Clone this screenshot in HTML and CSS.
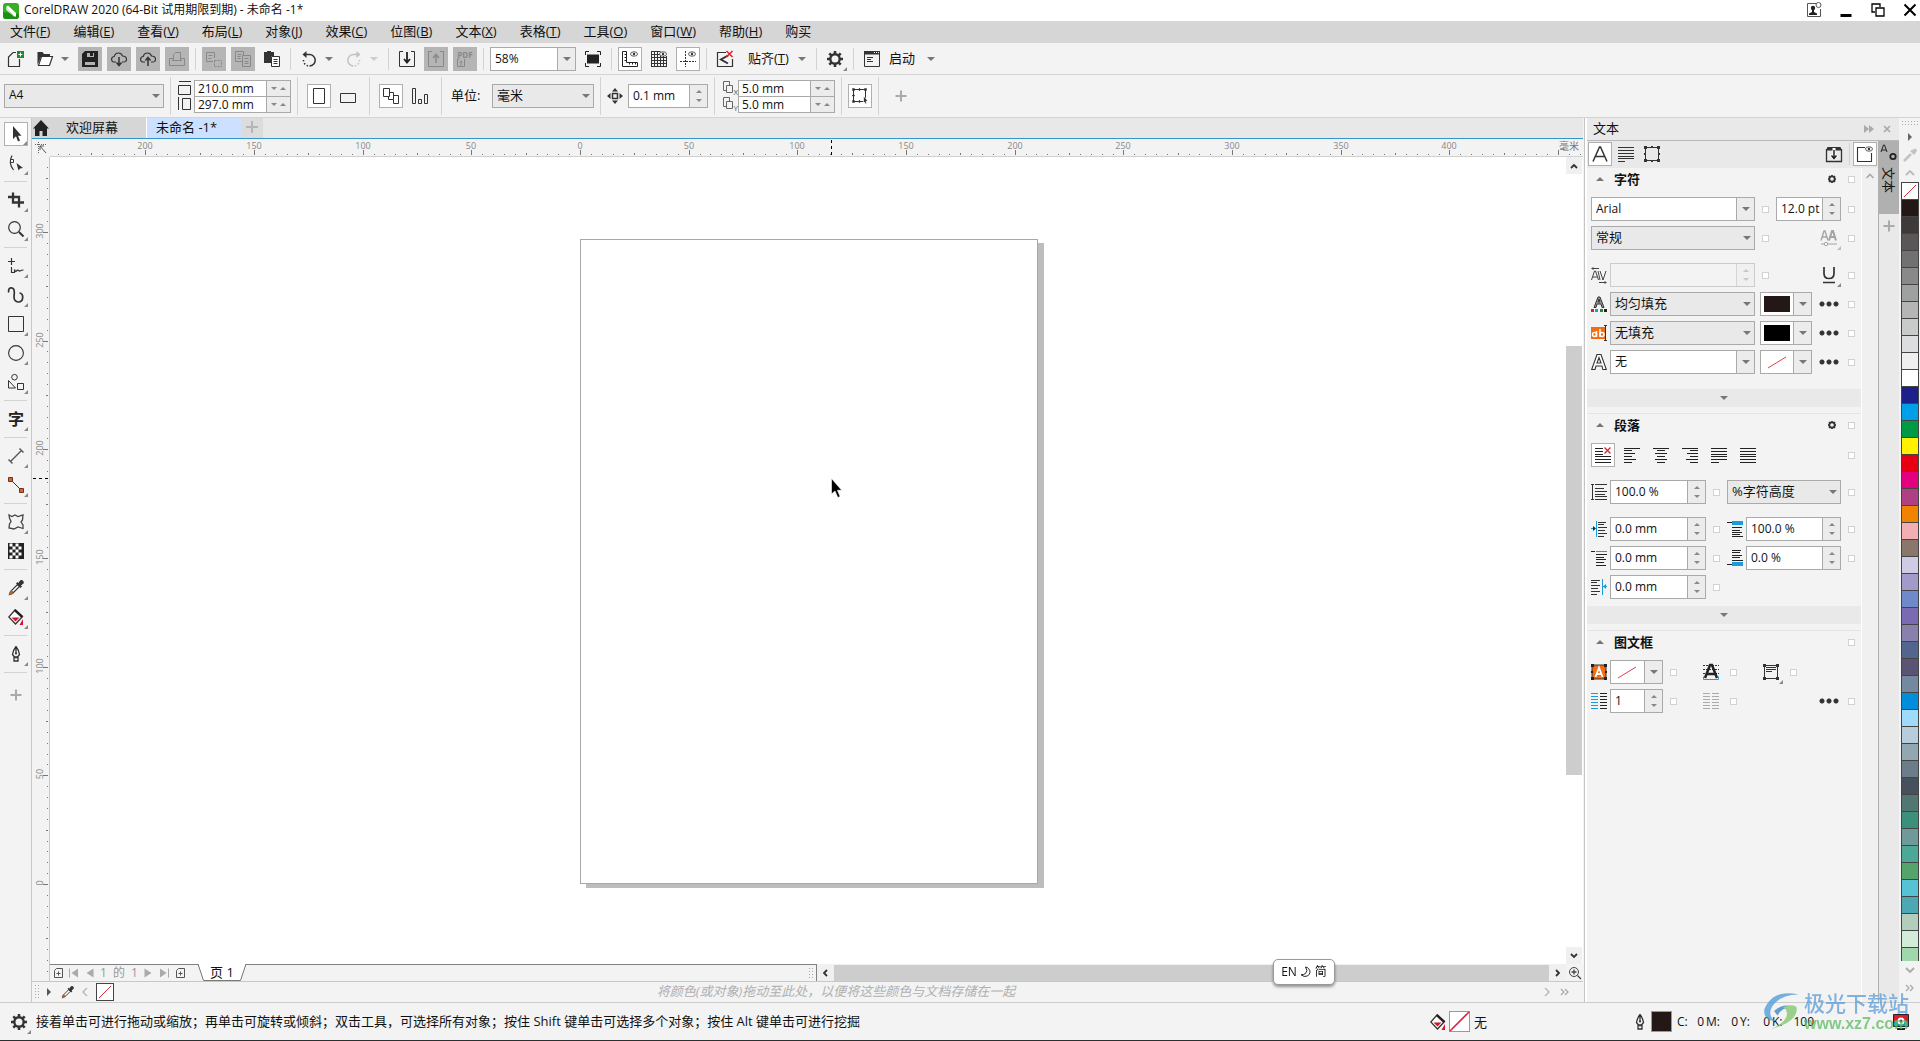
FILE: index.html
```html
<!DOCTYPE html>
<html lang="zh-CN">
<head>
<meta charset="utf-8">
<title>CorelDRAW 2020 (64-Bit 试用期限到期) - 未命名 -1*</title>
<link rel="stylesheet" href="styles.css">
</head>
<body>
<svg class="sprite" aria-hidden="true">
  <symbol id="i-gear" viewBox="0 0 16 16"><circle cx="8" cy="8" r="4.7" fill="none" stroke="#333" stroke-width="2.4"/><path d="M8 0v3M8 13v3M0 8h3M13 8h3M2.3 2.3l2 2M11.700 11.700l2 2M2.300 13.700l2-2M11.700 4.300l2-2" stroke="#333" stroke-width="2.6"/></symbol>
  <symbol id="i-gear-s" viewBox="0 0 16 16"><circle cx="8" cy="8" r="2.700" fill="none" stroke="#333" stroke-width="1.800"/><path d="M8 4v1M8 11v1M4 8h1M11 8h1M5 5l1 1M10 10l1 1M5 11l1-1M10 6l1-1" stroke="#333" stroke-width="1.600"/></symbol>
  <symbol id="i-eye" viewBox="0 0 8 6"><ellipse cx="4" cy="3" rx="3.500" ry="2.200" fill="#fff" stroke="#333" stroke-width=".8"/><circle cx="4" cy="3" r="1.200" fill="#333"/></symbol>
  <symbol id="i-dropper" viewBox="0 0 16 16"><path d="M1.500 14.500l1-3 7-7 2 2-7 7z" fill="#fff" stroke="#333" stroke-width="1.200"/><path d="M1 15l1-3.500 1.500-1.500 2 2L4 14z" fill="#b5652b"/><path d="M8 3.500L12.500 8 14 6.500 13 5.500l2.500-2q.8-1.500-.5-2.800T12 .5L10.500 3l-1-1z" fill="#333"/></symbol>
  <symbol id="i-bucket" viewBox="0 0 16 16"><path d="M7 1l7.500 6.500L7.500 15 .8 8z" fill="#fff" stroke="#333" stroke-width="1.300"/><path d="M7.500 0l7.500 7-1.500 2L6 2z" fill="#222"/><path d="M3.500 8.500h8l-4 4z" fill="#d8102c"/><path d="M15 10v6h-3.500z" fill="#d8102c"/></symbol>
  <symbol id="i-pen" viewBox="0 0 16 16"><path d="M8 .5q-3 4-3.500 8L6.500 11h3l2-2.500Q11 4.500 8 .5zM8 1v7M6 11.500h4V15H6z" fill="none" stroke="#333" stroke-width="1.300"/><circle cx="8" cy="7.500" r="1" fill="#333"/></symbol>
  <symbol id="i-pgadd" viewBox="0 0 12 12"><path d="M4.500 1.500h6v9h-8v-7zM6.500 4.500v4M4.500 6.500h4" fill="none" stroke="#555"/></symbol>
  <symbol id="i-portrait" viewBox="0 0 16 16"><path d="M2.500.5h11v15h-11z" fill="none" stroke="#333"/></symbol>
  <symbol id="i-dup" viewBox="0 0 16 16"><path d="M5.500 10.500h-3v-9h6v4M5.500 5.500h6v7h-6z" fill="none" stroke="#666"/></symbol>
  <symbol id="i-cloud" viewBox="0 0 16 16"><path d="M5 11H3.500Q.6 11 .6 8.300T3.300 5.500Q4 2 7.500 2q3 0 4 3 4 .3 4 3.200T12 11h-1" fill="none" stroke="#333" stroke-width="1.200"/></symbol>
</svg>

<header class="titlebar">
  <svg class="applogo" viewBox="0 0 16 16"><rect width="16" height="16" rx="3" fill="#36b022"/><path d="M0 9v4q0 3 3 3h10q3 0 3-3v-2z" fill="#1c8f15"/><path d="M3 4l2-1.500L13 10v3.500H11z" fill="#fff"/><path d="M3 4q-.2 3 1.500 4L11 13.500" fill="#dff0d8"/></svg>
  <h1>CorelDRAW 2020 (64-Bit 试用期限到期) - 未命名 -1*</h1>
  <div class="winbtns">
    <button aria-label="账户"><svg viewBox="0 0 16 16"><path d="M10 1.500H1.500v13h13V7" fill="none" stroke="#555"/><circle cx="7" cy="6" r="2.200" fill="#222"/><path d="M6 7h2v3l3 1.500V13H3v-1.500L6 10z" fill="#222"/><circle cx="12.500" cy="3" r="2.500" fill="#fff" stroke="#555"/></svg></button>
    <button aria-label="最小化"><svg viewBox="0 0 16 16"><path d="M2.500 12h11v3h-11z" fill="#000"/></svg></button>
    <button aria-label="还原"><svg viewBox="0 0 16 16"><path d="M5 10H2V2h8v3M6 6h8v8H6z" fill="none" stroke="#000" stroke-width="1.300"/></svg></button>
    <button aria-label="关闭"><svg viewBox="0 0 16 16"><path d="M2.500 2.500l11 11M13.500 2.500l-11 11" stroke="#000" stroke-width="2"/></svg></button>
  </div>
</header>

<nav class="menubar">
  <a href="#">文件(<u>F</u>)</a><a href="#">编辑(<u>E</u>)</a><a href="#">查看(<u>V</u>)</a><a href="#">布局(<u>L</u>)</a><a href="#">对象(<u>J</u>)</a><a href="#">效果(<u>C</u>)</a><a href="#">位图(<u>B</u>)</a><a href="#">文本(<u>X</u>)</a><a href="#">表格(<u>T</u>)</a><a href="#">工具(<u>O</u>)</a><a href="#">窗口(<u>W</u>)</a><a href="#">帮助(<u>H</u>)</a><a href="#">购买</a>
</nav>

<div class="toolbar standard">
  <button class="ib" aria-label="新建"><svg viewBox="0 0 16 16"><path d="M8 1.500H5L.5 6v9.500h11V8" fill="none" stroke="#333" stroke-width="1.200"/><path d="M9 0h7v7H9z" fill="#1b8a35"/><path d="M12.500 1.500v4M10.500 3.500h4" stroke="#fff"/></svg></button>
  <span class="split"><button class="ib" aria-label="打开"><svg viewBox="0 0 16 16"><path d="M.5 14V1h5l1.500 2h6v3H4z" fill="#333"/><path d="M4.500 5.500h11l-3 9H1.500z" fill="#fff" stroke="#333" stroke-width="1.200"/></svg></button><button class="arrow" aria-label="打开选项"></button></span>
  <button class="ib off" aria-label="保存"><svg viewBox="0 0 16 16"><path d="M3 0h13v16H0V3z" fill="#222"/><path d="M5 2h7v4H5zM3 9h10v5H3z" fill="#b3b3b3"/><path d="M8 2h3v3H8zM3 9h10v2H3z" fill="#222"/></svg></button>
  <button class="ib off" aria-label="从云打开"><svg viewBox="0 0 16 16"><use href="#i-cloud"/><path d="M8 6v8M5.500 11.500L8 14.500l2.500-3" fill="none" stroke="#333" stroke-width="1.500"/></svg></button>
  <button class="ib off" aria-label="保存到云"><svg viewBox="0 0 16 16"><use href="#i-cloud"/><path d="M8 15V7M5.500 9.500L8 6.500l2.500 3" fill="none" stroke="#333" stroke-width="1.500"/></svg></button>
  <button class="ib off" aria-label="打印"><svg viewBox="0 0 16 16"><path d="M4.500 9.500v-6l2-2h5v8M4 7.500H.5v7h15v-7H12M3 9.500h10" fill="none" stroke="#888"/></svg></button>
  <i class="sep"></i>
  <button class="ib off" aria-label="剪切"><svg viewBox="0 0 16 16"><path d="M8.500 7V1.500h-8v9H7M2.500 4.500h4M2.500 7.500h3" fill="none" stroke="#888"/><path d="M8.500 9.500h7v6h-7z" fill="none" stroke="#888" stroke-dasharray="2 1"/></svg></button>
  <button class="ib off" aria-label="复制"><svg viewBox="0 0 16 16"><path d="M8 10.500H.5v-10h8V4M2.500 3.500h4M2.500 5.500h3M2.500 7.500h3M7.500 4.500h8v11h-8zM9.500 7.500h4M9.500 10.500h4M9.500 12.500h4" fill="none" stroke="#888"/></svg></button>
  <button class="ib" aria-label="粘贴"><svg viewBox="0 0 16 16"><path d="M0 1h3V0h4v1h3v4H7v7H0z" fill="#333"/><path d="M7.500 5.500h8v10h-8zM9.500 8.500h4M9.500 10.500h4M9.500 12.500h4" fill="#fff" stroke="#333"/></svg></button>
  <i class="sep"></i>
  <span class="split"><button class="ib" aria-label="撤消"><svg viewBox="0 0 16 16"><path d="M4 3.500h4.500a5.700 5.700 0 0 1 0 11.400" fill="none" stroke="#333" stroke-width="1.500"/><path d="M2.500 9a5.700 5.700 0 0 0 6 6" fill="none" stroke="#333" stroke-width="1.500" stroke-dasharray="1.500 1.800"/><path d="M5.500 0v7L1.500 3.500z" fill="#333"/></svg></button><button class="arrow" aria-label="撤消列表"></button></span>
  <span class="split faded"><button class="ib" aria-label="重做"><svg viewBox="0 0 16 16"><path d="M12 3.500H7.500a5.700 5.700 0 0 0 0 11.400" fill="none" stroke="#555" stroke-width="1.500"/><path d="M13.500 9a5.700 5.700 0 0 1-6 6" fill="none" stroke="#555" stroke-width="1.500" stroke-dasharray="1.500 1.800"/><path d="M10.500 0v7l4-3.500z" fill="#555"/></svg></button><button class="arrow" aria-label="重做列表"></button></span>
  <i class="sep"></i>
  <button class="ib" aria-label="导入"><svg viewBox="0 0 16 16"><path d="M4 .5H.5v15h15V.5H12" fill="none" stroke="#333"/><path d="M8 1v10M5 8l3 3.500L11 8" fill="none" stroke="#222" stroke-width="1.800"/></svg></button>
  <button class="ib off" aria-label="导出"><svg viewBox="0 0 16 16"><path d="M4 .5H.5v15h15V.5H12" fill="none" stroke="#888"/><path d="M8 12V4M5 7l3-3.500L11 7" fill="none" stroke="#888" stroke-width="1.500"/></svg></button>
  <button class="ib off pdf" aria-label="发布为PDF"><b>PDF</b><svg viewBox="0 0 16 8"><path d="M2.500 0h-2v7.500h7V0M4 7V2M2.500 3.500L4 2l1.500 1.500" fill="none" stroke="#888"/></svg></button>
  <i class="sep"></i>
  <span class="ecombo zoomlvl"><input type="text" value="58%" aria-label="缩放级别"><button class="arrow" aria-label="缩放列表"></button></span>
  <button class="ib" aria-label="全屏预览"><svg viewBox="0 0 16 16"><path d="M2 3.500h12v9H2z" fill="#222"/><path d="M.5 4V.5H4M12 .5h3.500V4M.5 12v3.500H4M12 15.500h3.500V12" fill="none" stroke="#222"/></svg></button>
  <i class="sep"></i>
  <button class="ib on" aria-label="标尺"><svg viewBox="0 0 16 16"><path d="M.5.5h4v11h11v4H.5zM2.500 3.500h2M2.500 6.500h2M2.500 9.500h2M7.500 13.500v-2M10.500 13.500v-2M13.500 13.500v-2" fill="none" stroke="#222"/><use href="#i-eye" x="8" y="0" width="8" height="6"/></svg></button>
  <button class="ib" aria-label="网格"><svg viewBox="0 0 16 16"><path d="M.5.5v15M3.500.5v15M6.500.5v15M9.500.5v15M12.500 5v10.500M15.500 5v10.500M0 .5h9M0 3.500h9M0 6.500h16M0 9.500h16M0 12.500h16M0 15.500h16" fill="none" stroke="#333"/><use href="#i-eye" x="8" y="0" width="8" height="6"/></svg></button>
  <button class="ib on" aria-label="辅助线"><svg viewBox="0 0 16 16"><path d="M5.500 0v16M0 10.500h16" fill="none" stroke="#333" stroke-dasharray="2 1"/><use href="#i-eye" x="8" y="0" width="8" height="6"/></svg></button>
  <i class="sep"></i>
  <button class="ib" aria-label="贴齐关闭"><svg viewBox="0 0 16 16"><path d="M9 1.500H.5v14h15V8" fill="none" stroke="#333" stroke-width="1.200"/><path d="M11 4.500L4 8.500l7 4" fill="none" stroke="#333" stroke-width="2"/><path d="M9.500 0l6 6M15.500 0l-6 6" stroke="#e0202c" stroke-width="1.500"/></svg></button>
  <button class="tb snap"><span>贴齐(<u>T</u>)</span><i class="tri"></i></button>
  <i class="sep"></i>
  <button class="ib fly" aria-label="选项"><svg viewBox="0 0 16 16"><use href="#i-gear"/></svg></button>
  <i class="sep"></i>
  <button class="ib" aria-label="应用程序"><svg viewBox="0 0 16 16"><path d="M.5.5h15v15H.5z" fill="none" stroke="#333"/><path d="M0 0h16v3.500H0z" fill="#333"/><path d="M3 6.500h6M3 8.500h4M3 10.500h6" stroke="#333"/><path d="M10 1.500h1M12 1.500h1M14 1.500h1" stroke="#fff"/></svg></button>
  <button class="tb launch"><span>启动</span><i class="tri"></i></button>
</div>

<div class="toolbar property">
  <span class="select papersize"><select aria-label="页面大小"><option>A4</option></select></span>
  <i class="sep"></i>
  <div class="pair dims">
    <label for="pw"><svg viewBox="0 0 16 16"><path d="M2 1.500h12M1.500 5.500h12v9h-12z" fill="none" stroke="#333"/></svg></label><span class="mini"><input id="pw" type="text" value="210.0 mm"><i class="spinh"></i></span>
    <label for="ph"><svg viewBox="0 0 16 16"><path d="M1.500 1v13M5.500 2.500h8v11h-8z" fill="none" stroke="#333"/></svg></label><span class="mini"><input id="ph" type="text" value="297.0 mm"><i class="spinh"></i></span>
  </div>
  <i class="sep"></i>
  <div class="grp"><button class="ib on" aria-label="纵向"><svg viewBox="0 0 16 16"><use href="#i-portrait"/></svg></button><button class="ib" aria-label="横向"><svg viewBox="0 0 16 16"><path d="M.5 5.500h15v9H.5z" fill="none" stroke="#333"/></svg></button></div>
  <i class="sep"></i>
  <div class="grp"><button class="ib on" aria-label="所有页面"><svg viewBox="0 0 16 16"><path d="M.5.5h6v8h-6zM5.500 8.500v3h5v-7h-4M10.500 7.500h5v8h-5v-4" fill="none" stroke="#333"/></svg></button><button class="ib" aria-label="当前页面"><svg viewBox="0 0 16 16"><path d="M.5.5h3v15h-3zM6.500 11.500h3v4h-3zM12.500 6.500h3v9h-3z" fill="none" stroke="#333"/></svg></button></div>
  <i class="sep"></i>
  <label class="unitlabel" for="unit">单位:</label>
  <span class="select unit"><select id="unit"><option>毫米</option></select></span>
  <i class="sep"></i>
  <label class="nudgeicon" for="nudge"><svg viewBox="0 0 16 16"><path d="M5.500 5.500h5v5h-5z" fill="none" stroke="#333" stroke-width="1.500"/><path d="M8 0l3 3.500H5zM8 16l3-3.500H5zM0 8l3.500-3v6zM16 8l-3.500-3v6z" fill="#333"/></svg></label>
  <span class="num nudge"><input id="nudge" type="text" value="0.1 mm"><i class="spin"></i></span>
  <i class="sep"></i>
  <div class="pair dup">
    <label for="dx"><svg viewBox="0 0 16 16"><use href="#i-dup"/></svg><sub>X</sub></label><span class="mini"><input id="dx" type="text" value="5.0 mm"><i class="spinh"></i></span>
    <label for="dy"><svg viewBox="0 0 16 16"><use href="#i-dup"/></svg><sub>Y</sub></label><span class="mini"><input id="dy" type="text" value="5.0 mm"><i class="spinh"></i></span>
  </div>
  <i class="sep"></i>
  <button class="ib on" aria-label="将所有对象视为已填充"><svg viewBox="0 0 16 16"><path d="M1.500 1.500h12v12h-12z" fill="none" stroke="#333"/><path d="M.5.5h2v2h-2zM7 .5h1v2H7zM12.500.5h2v2h-2zM.5 7h2v1h-2zM.5 12.500h2v2h-2zM7 12.500h1v2H7z" fill="#333" stroke="#333" stroke-width=".5"/><path d="M11.500 8l4.500 5-2 .3.700 2-1.500.7-.7-2-1 1z" fill="#333" stroke="#fff" stroke-width=".7"/></svg></button>
  <i class="sep"></i>
  <button class="ib addp" aria-label="快速自定义"><svg viewBox="0 0 16 16"><path d="M8 2.500v11M2.500 8h11" stroke="#aaa" stroke-width="2"/></svg></button>
</div>

<main class="main">
  <aside class="toolbox">
    <button class="ib on fly" aria-label="选择"><svg viewBox="0 0 16 16"><path d="M5 0v13l3-2.700 2 5.200 2-1-2-4.700h3.500z" fill="#333"/></svg></button>
    <button class="ib fly" aria-label="形状"><svg viewBox="0 0 16 16"><path d="M4 .5Q0 8 5.500 15" fill="none" stroke="#333" stroke-width="1.200"/><path d="M2.500 4.500h3v3h-3z" fill="#fff" stroke="#333"/><path d="M8.500 8l6.500 5-3 .5-1.500 2z" fill="#333"/></svg></button>
    <i class="sep"></i>
    <button class="ib fly" aria-label="裁剪"><svg viewBox="0 0 16 16"><path d="M5 .5v10h11M0 5h11v10.500" fill="none" stroke="#333" stroke-width="2.300"/></svg></button>
    <button class="ib fly" aria-label="缩放"><svg viewBox="0 0 16 16"><circle cx="6.500" cy="6.500" r="5.800" fill="none" stroke="#333" stroke-width="1.200"/><path d="M11 11l4.500 4.500" stroke="#333" stroke-width="2"/></svg></button>
    <i class="sep"></i>
    <button class="ib fly" aria-label="手绘"><svg viewBox="0 0 16 16"><path d="M3.500 0v7M0 3.500h7M3.500 9v5.500h3v-3q1 3 2 1.500t2-.5 2 .3 3-.8" fill="none" stroke="#333" stroke-width="1.200"/></svg></button>
    <button class="ib fly" aria-label="艺术笔"><svg viewBox="0 0 16 16"><path d="M.7 5.500Q0 1 3 .8 6.500.5 6.300 6L6 10.500Q6.500 15 11 15q3.500-.5 3.700-4.500T11.500 6" fill="none" stroke="#333" stroke-width="1.700"/></svg></button>
    <button class="ib fly" aria-label="矩形"><svg viewBox="0 0 16 16"><path d="M.5.5h15v15H.5z" fill="none" stroke="#333"/></svg></button>
    <button class="ib fly" aria-label="椭圆形"><svg viewBox="0 0 16 16"><circle cx="8" cy="8" r="7.400" fill="none" stroke="#333" stroke-width="1.100"/></svg></button>
    <button class="ib fly" aria-label="多边形"><svg viewBox="0 0 16 16"><circle cx="6.500" cy="3.200" r="2.800" fill="none" stroke="#333"/><path d="M.5 6.500l7 7.500h-7zM9.500 9.500h6v6h-6z" fill="none" stroke="#333"/></svg></button>
    <i class="sep"></i>
    <button class="ib fly texttool" aria-label="文本">字</button>
    <i class="sep"></i>
    <button class="ib fly" aria-label="平行度量"><svg viewBox="0 0 16 16"><path d="M2.500 13.500l11-11M.5 11.500l4 4M11.500.5l4 4" stroke="#555" stroke-width="1.400"/></svg></button>
    <button class="ib fly" aria-label="连接器"><svg viewBox="0 0 16 16"><path d="M3 3l10 10" stroke="#333"/><path d="M.5.500h4v4h-4zM11.500 11.500h4v4h-4z" fill="#c9683a" stroke="#7a3110"/></svg></button>
    <i class="sep"></i>
    <button class="ib fly" aria-label="变形"><svg viewBox="0 0 16 16"><path d="M1 1l3 1.500L7 1l3 1.500L15 1l-.5 5-1.500 2 2 3v3.500L10 13l-4 2-5-1 .5-4L3 7.500 1.500 4z" fill="none" stroke="#444" stroke-width="1.300"/></svg></button>
    <button class="ib" aria-label="透明度"><svg viewBox="0 0 16 16"><path d="M0 0h16v16H0z" fill="#222"/><path d="M2.500 2h9M5.500 5h9M2.500 8h9M5.500 11h9M2.500 14h9" stroke="#fff" stroke-width="3" stroke-dasharray="3 3" transform="translate(-1 0)"/></svg></button>
    <i class="sep"></i>
    <button class="ib fly" aria-label="颜色滴管"><svg viewBox="0 0 16 16"><use href="#i-dropper"/></svg></button>
    <button class="ib fly" aria-label="交互式填充"><svg viewBox="0 0 16 16"><use href="#i-bucket"/></svg></button>
    <i class="sep"></i>
    <button class="ib fly" aria-label="轮廓笔"><svg viewBox="0 0 16 16"><use href="#i-pen"/></svg></button>
    <i class="sep"></i>
    <button class="ib addp" aria-label="快速自定义"><svg viewBox="0 0 16 16"><path d="M8 2.500v11M2.500 8h11" stroke="#aaa" stroke-width="2"/></svg></button>
  </aside>

  <section class="workspace">
    <div class="doctabs">
      <button class="home" aria-label="主页"><svg viewBox="0 0 16 16"><path d="M8 0l8 8.500h-2V16H9.500v-5h-3v5H2V8.500H0z" fill="#222"/></svg></button>
      <button class="dtab welcome">欢迎屏幕</button>
      <button class="dtab current">未命名 -1*</button>
      <button class="dtab newtab" aria-label="新建文档"><svg viewBox="0 0 16 16"><path d="M8 2v12M2 8h12" stroke="#b5b5b5" stroke-width="2"/></svg></button>
    </div>
    <div class="stage">
      <div class="corner"><svg viewBox="0 0 16 16"><path d="M2 4.500h12M5.500 2v12" stroke="#666" stroke-dasharray="1 1"/><path d="M7 6l6 7M7 6v4M7 6h4" fill="none" stroke="#555"/></svg></div>
      <div class="hruler"><svg id="hruler"></svg><span class="unitname">毫米</span></div>
      <div class="vruler"><svg id="vruler"></svg></div>
      <div class="canvas">
        <div class="page"></div>
        <svg class="pointer" viewBox="0 0 11 20"><path d="M.5.500v15.500l3.500-3 2.800 6.500 2.300-1-2.700-6.200h4.300z" fill="#000" stroke="#fff" stroke-width=".6"/></svg>
      </div>
      <div class="vscroll"><button aria-label="向上"><svg viewBox="0 0 16 16"><path d="M5 10l3-3 3 3" fill="none" stroke="#333" stroke-width="1.800"/></svg></button><div class="vtrack"><i></i></div><button aria-label="向下"><svg viewBox="0 0 16 16"><path d="M5 6l3 3 3-3" fill="none" stroke="#333" stroke-width="1.800"/></svg></button></div>
      <div class="bottomrow">
        <div class="pagenav">
          <button aria-label="添加页"><svg viewBox="0 0 12 12"><use href="#i-pgadd"/></svg></button>
          <button aria-label="首页"><svg viewBox="0 0 12 12"><path d="M10 1.500v9L3.500 6zM1 1.500h1v9H1z" fill="#aaa"/></svg></button>
          <button aria-label="上一页"><svg viewBox="0 0 12 12"><path d="M9.500 1.500v9L2.500 6z" fill="#aaa"/></svg></button>
          <span>1</span><span class="of">的</span><span>1</span>
          <button aria-label="下一页"><svg viewBox="0 0 12 12"><path d="M2.500 1.500v9L9.500 6z" fill="#aaa"/></svg></button>
          <button aria-label="末页"><svg viewBox="0 0 12 12"><path d="M2 1.500v9L8.500 6zM10 1.500h1v9h-1z" fill="#aaa"/></svg></button>
          <button aria-label="在后添加页"><svg viewBox="0 0 12 12"><use href="#i-pgadd"/></svg></button>
          <button class="ptab"><svg viewBox="0 0 48 17"><path d="M0 0L5.500 16.500h37L48 0" fill="#fff" stroke="#777"/></svg><span>页 1</span></button>
          <i class="grip"></i>
        </div>
        <div class="hscroll"><button aria-label="向左"><svg viewBox="0 0 16 16"><path d="M10 5L7 8l3 3" fill="none" stroke="#333" stroke-width="1.800"/></svg></button><i></i><button aria-label="向右"><svg viewBox="0 0 16 16"><path d="M6 5l3 3-3 3" fill="none" stroke="#333" stroke-width="1.800"/></svg></button></div>
        <button class="navigator" aria-label="导航器"><svg viewBox="0 0 16 16"><circle cx="7" cy="7" r="4.500" fill="none" stroke="#444"/><path d="M7 4.500v5M4.500 7h5M10.500 10.500L14 14" stroke="#444" stroke-width="1.300"/></svg></button>
      </div>
    </div>
    <div class="docpalette">
      <i class="grip"></i>
      <button aria-label="菜单"><svg viewBox="0 0 16 16"><path d="M6 4l4 4-4 4z" fill="#555"/></svg></button>
      <button aria-label="滴管"><svg viewBox="0 0 16 16"><use href="#i-dropper" x="2" y="2" width="13" height="13"/></svg></button>
      <button aria-label="向左滚动"><svg viewBox="0 0 16 16"><path d="M10 4L6 8l4 4" fill="none" stroke="#bbb" stroke-width="1.500"/></svg></button>
      <button class="none" aria-label="无颜色"><svg viewBox="0 0 16 16"><path d="M2 14L14 2" stroke="#d03040"/></svg></button>
      <p>将颜色(或对象)拖动至此处，以便将这些颜色与文档存储在一起</p>
      <button aria-label="向右滚动"><svg viewBox="0 0 16 16"><path d="M6 4l4 4-4 4" fill="none" stroke="#bbb" stroke-width="1.500"/></svg></button>
      <button aria-label="展开"><svg viewBox="0 0 16 16"><path d="M4 5l3 3-3 3M8 5l3 3-3 3" fill="none" stroke="#aaa" stroke-width="1.300"/></svg></button>
    </div>
  </section>

  <section class="docker">
    <div class="dockhead"><h2>文本</h2><button aria-label="折叠"><svg viewBox="0 0 16 16"><path d="M3 4l5 4-5 4zM8 4l5 4-5 4z" fill="#aaa"/></svg></button><button aria-label="关闭"><svg viewBox="0 0 16 16"><path d="M5 5l6 6M11 5l-6 6" stroke="#aaa" stroke-width="1.700"/></svg></button></div>
    <div class="dockmain">
      <div class="dockcol">
        <div class="docktabs">
          <button class="ib on" aria-label="字符"><svg viewBox="0 0 16 16"><path d="M1 15.500L7.500 1h1L15 15.500M3.500 10.500h9" fill="none" stroke="#333" stroke-width="1.500"/></svg></button>
          <button class="ib" aria-label="段落"><svg viewBox="0 0 16 16"><path d="M0 1.500h16M0 4.500h16M0 7.500h16M0 10.500h16M0 12.500h16M0 15.500h7" stroke="#333"/></svg></button>
          <button class="ib" aria-label="图文框"><svg viewBox="0 0 16 16"><path d="M1.500 1.500h13v13h-13z" fill="none" stroke="#333"/><path d="M0 0h3v3H0zM13 0h3v3h-3zM0 13h3v3H0zM13 13h3v3h-3zM7 0h2v2H7zM7 14h2v2H7zM0 7h2v2H0zM14 7h2v2h-2z" fill="#333"/></svg></button>
          <button class="ib push" aria-label="导入样式"><svg viewBox="0 0 16 16"><path d="M.5 3v12.500h15V3" fill="none" stroke="#333" stroke-width="1.300"/><path d="M1.500 1h13L16 4.500H0z" fill="#333"/><path d="M8 2v10M5 9l3 3.500L11 9" fill="none" stroke="#fff" stroke-width="3"/><path d="M8 4v8M5.500 9.500L8 12.500l2.500-3" fill="none" stroke="#222" stroke-width="1.500"/></svg></button>
          <i class="sep"></i>
          <button class="ib on" aria-label="预览"><svg viewBox="0 0 16 16"><path d="M8 1.500H.5v14h14V7" fill="none" stroke="#333" stroke-width="1.100"/><use href="#i-eye" x="8" y="0" width="8" height="6"/></svg></button>
        </div>
        <div class="dockscroll">
          <div class="panel">
            <section class="sect">
              <h3><i class="triup"></i>字符<button class="ib" aria-label="字符选项"><svg viewBox="0 0 16 16"><use href="#i-gear-s"/></svg></button><i class="sq"></i></h3>
              <div class="row"><span class="ecombo font"><input type="text" value="Arial" aria-label="字体"><button class="arrow" aria-label="字体列表"></button></span><i class="sq"></i><span class="num size"><input type="text" value="12.0 pt" aria-label="字号"><i class="spin"></i></span><i class="sq"></i></div>
              <div class="row"><span class="select font"><select aria-label="字形"><option>常规</option></select></span><i class="sq"></i><button class="ib fly push dim" aria-label="字距调整"><svg viewBox="0 0 16 16"><path d="M0 10.500L3 1h1l3 9.500M1.500 7h4" fill="none" stroke="#555" stroke-width="1.300"/><path d="M8 10.500L11 1h1l3 9.500M9.500 7h4" fill="none" stroke="#555" stroke-width="2"/><path d="M0 14h16" stroke="#555"/><circle cx="5" cy="14" r="1.700" fill="#fff" stroke="#555"/></svg></button><i class="sq"></i></div>
              <div class="row spaced"><span class="ctl"><label for="kern"><svg viewBox="0 0 16 16"><path d="M.5 13l3-9h1l3 9M2 10h4M7 4l2 9M9 4l3 9 3-9M1 1.500h7M8 15.500h7" fill="none" stroke="#444"/><path d="M0 1.500l2.500-1.500v3zM16 15.500l-2.500-1.500v3z" fill="#444"/></svg></label><span class="num kern"><input id="kern" type="text" disabled><i class="spin"></i></span></span><i class="sq"></i><button class="ib fly push" aria-label="下划线"><svg viewBox="0 0 16 16"><path d="M3 0v6.500q0 5 5 5t5-5V0M2 15.500h12" fill="none" stroke="#333" stroke-width="1.700"/></svg></button><i class="sq"></i></div>
              <div class="row tight"><span class="ctl"><label for="fill"><svg viewBox="0 0 16 16"><path d="M3 11.500L7 1h2l4 10.500h-2L10 8H6l-1 3.500zM7 6h2L8 3z" fill="#999" stroke="#333"/><path d="M0 13h3v3H0z" fill="#e02020"/><path d="M4 13h3v3H4z" fill="#12a0e0"/><path d="M9 13h3v3H9z" fill="#188a35"/><path d="M13 13h3v3h-3z" fill="#222"/></svg></label><span class="select"><select id="fill"><option>均匀填充</option></select></span></span><button class="swatch"><i class="brown"></i><b></b></button><button class="ib dots push" aria-label="填充设置"></button><i class="sq"></i></div>
              <div class="row tight"><span class="ctl"><label for="bgf"><svg viewBox="0 0 16 16"><path d="M0 2h14v12H0z" fill="#f36c10"/><path d="M5.500 6v6M9 4v8" fill="none" stroke="#fff" stroke-width="1.500"/><circle cx="3.500" cy="9.500" r="2" fill="none" stroke="#fff" stroke-width="1.500"/><circle cx="11" cy="9.500" r="2" fill="none" stroke="#fff" stroke-width="1.500"/><path d="M14.500 1v14M13 .5h3M13 15.500h3" stroke="#333"/></svg></label><span class="select"><select id="bgf"><option>无填充</option></select></span></span><button class="swatch"><i class="black"></i><b></b></button><button class="ib dots push" aria-label="背景设置"></button><i class="sq"></i></div>
              <div class="row tight"><span class="ctl"><label for="outl"><svg viewBox="0 0 16 16"><path d="M.7 15.500L6 .5h4l5.300 15h-3.500L11 12H5l-1 3.500zM6 9h4L8 3.500z" fill="#fff" stroke="#333" stroke-width="1.100"/></svg></label><span class="ecombo"><input id="outl" type="text" value="无"><button class="arrow" aria-label="轮廓宽度"></button></span></span><button class="swatch"><svg viewBox="0 0 32 22"><path d="M7 17L25 6" stroke="#d84050"/></svg><b></b></button><button class="ib dots push" aria-label="轮廓设置"></button><i class="sq"></i></div>
            </section>
            <button class="more far" aria-label="更多字符选项"><i class="tri"></i></button>
            <section class="sect line">
              <h3><i class="triup"></i>段落<button class="ib" aria-label="段落选项"><svg viewBox="0 0 16 16"><use href="#i-gear-s"/></svg></button><i class="sq"></i></h3>
              <div class="row tight"><button class="ib on" aria-label="无对齐"><svg viewBox="0 0 16 16"><path d="M0 1.500h8M0 4.500h8M0 7.500h8M0 9.500h16M0 12.500h16M0 15.500h16" stroke="#222"/><path d="M9.500.500l6 6M15.500.500l-6 6" stroke="#e0202c" stroke-width="1.300"/></svg></button><button class="ib" aria-label="左对齐"><svg viewBox="0 0 16 16"><path d="M0 1.500h16M0 3.500h8M0 6.500h11M0 9.500h8M0 12.500h12M0 15.500h8" stroke="#222"/></svg></button><button class="ib" aria-label="居中"><svg viewBox="0 0 16 16"><path d="M0 1.500h16M4 3.500h8M2 6.500h12M4 9.500h8M2 12.500h12M4 15.500h8" stroke="#222"/></svg></button><button class="ib" aria-label="右对齐"><svg viewBox="0 0 16 16"><path d="M0 1.500h16M8 3.500h8M5 6.500h11M8 9.500h8M4 12.500h12M8 15.500h8" stroke="#222"/></svg></button><button class="ib" aria-label="两端对齐"><svg viewBox="0 0 16 16"><path d="M0 1.500h16M0 4.500h16M0 7.500h16M0 9.500h16M0 12.500h16M0 15.500h8" stroke="#222"/></svg></button><button class="ib" aria-label="强制对齐"><svg viewBox="0 0 16 16"><path d="M0 1.500h16M0 4.500h16M0 7.500h16M0 9.500h16M0 12.500h16M0 15.500h16" stroke="#222"/></svg></button><i class="sq push"></i></div>
              <div class="row spaced"><span class="ctl short"><label for="lsp"><svg viewBox="0 0 16 16"><path d="M1.500 1v14M0 .5h3M0 15.500h3M4 .5h12M4 4.500h9M4 7.500h12M4 10.500h10M4 12.500h12M4 15.500h12" stroke="#333"/></svg></label><span class="num"><input id="lsp" type="text" value="100.0 %"><i class="spin"></i></span></span><i class="sq"></i><span class="select lunit"><select aria-label="行间距单位"><option>%字符高度</option></select></span><i class="sq push"></i></div>
              <div class="row spaced"><span class="ctl short"><label for="lin"><svg viewBox="0 0 16 16"><path d="M7 1.500h8M7 3.500h6M7 6.500h9M7 9.500h7M7 12.500h9M7 15.500h6" stroke="#333"/><path d="M5.500 0v16M0 7.500h4" stroke="#1a9be0"/><path d="M5 7.500L2 5v5z" fill="#222"/></svg></label><span class="num"><input id="lin" type="text" value="0.0 mm"><i class="spin"></i></span></span><i class="sq"></i><span class="ctl short"><label for="bef"><svg viewBox="0 0 16 16"><path d="M5 0h11v4H5z" fill="#1a9be0"/><path d="M0 1.500h5M5 6.500h10M5 9.500h8M5 11.500h10M5 13.500h8M5 15.500h11" stroke="#222"/></svg></label><span class="num"><input id="bef" type="text" value="100.0 %"><i class="spin"></i></span></span><i class="sq"></i></div>
              <div class="row"><span class="ctl short"><label for="fin"><svg viewBox="0 0 16 16"><path d="M5 1.500h11" stroke="#1a9be0"/><path d="M0 1.500h4M5 4.500h11M5 7.500h8M5 9.500h10M5 12.500h8M5 15.500h10" stroke="#222"/></svg></label><span class="num"><input id="fin" type="text" value="0.0 mm"><i class="spin"></i></span></span><i class="sq"></i><span class="ctl short"><label for="aft"><svg viewBox="0 0 16 16"><path d="M5 12h11v4H5z" fill="#1a9be0"/><path d="M0 14.500h5M5 .5h9M5 2.500h8M5 5.500h10M5 7.500h8M5 10.500h11" stroke="#222"/></svg></label><span class="num"><input id="aft" type="text" value="0.0 %"><i class="spin"></i></span></span><i class="sq"></i></div>
              <div class="row"><span class="ctl short"><label for="rin"><svg viewBox="0 0 16 16"><path d="M0 1.500h9M0 3.500h6M0 6.500h9M0 9.500h7M0 12.500h9M0 15.500h6" stroke="#333"/><path d="M11.500 0v16M12 7.500h4" stroke="#1a9be0"/><path d="M12 7.500l3-2.500v5z" fill="#1a9be0"/></svg></label><span class="num"><input id="rin" type="text" value="0.0 mm"><i class="spin"></i></span></span><i class="sq"></i></div>
            </section>
            <button class="more" aria-label="更多段落选项"><i class="tri"></i></button>
            <section class="sect line">
              <h3><i class="triup"></i>图文框<i class="sq push"></i></h3>
              <div class="row"><span class="ctl frame"><span class="lead"><svg viewBox="0 0 16 16"><path d="M1 1h14v14H1z" fill="#f36c10" stroke="#333"/><path d="M0 0h3v3H0zM13 0h3v3h-3zM0 13h3v3H0zM13 13h3v3h-3zM0 7h2v2H0zM14 7h2v2h-2z" fill="#222"/><path d="M4.500 13L8 3.500 11.500 13M6 10h4" fill="none" stroke="#fff" stroke-width="1.800"/></svg></span><button class="swatch"><svg viewBox="0 0 32 22"><path d="M7 17L25 6" stroke="#d84050"/></svg><b></b></button></span><i class="sq"></i><button class="ib wide" aria-label="对齐基线"><svg viewBox="0 0 16 16"><path d="M0 1.500h16M0 5.500h16M0 9.500h16" stroke="#333" stroke-dasharray="2 1"/><path d="M2 14L7 1h2l5 13M4 10h8" fill="none" stroke="#222" stroke-width="2.500"/><path d="M.5 12.500v3h15v-3" fill="none" stroke="#1a9be0"/></svg></button><i class="sq"></i><button class="ib fly wide" aria-label="垂直对齐"><svg viewBox="0 0 16 16"><path d="M1.500 1.500h13v13h-13zM3 3.500h10M3 5.500h10M3 7.500h6" fill="none" stroke="#333"/><path d="M0 0h3v3H0zM13 0h3v3h-3zM0 13h3v3H0zM13 13h3v3h-3z" fill="#333"/></svg></button><i class="sq"></i></div>
              <div class="row"><span class="ctl frame"><label for="cols"><svg viewBox="0 0 16 16"><path d="M0 .5h7M0 3.500h7M0 6.500h7M0 9.500h7M0 12.500h7M0 15.500h7" stroke="#1a9be0"/><path d="M9 .5h7M9 3.500h7M9 6.500h7M9 9.500h7M9 12.500h7M9 15.500h7" stroke="#222"/></svg></label><span class="num"><input id="cols" type="text" value="1"><i class="spin"></i></span></span><i class="sq"></i><button class="ib wide dim" aria-label="栏宽"><svg viewBox="0 0 16 16"><path d="M0 .5h7M0 3.500h7M0 6.500h7M0 9.500h7M0 12.500h7M0 15.500h7M9 .5h7M9 3.500h7M9 6.500h7M9 9.500h7M9 12.500h7M9 15.500h7" stroke="#666"/></svg></button><i class="sq"></i><button class="ib dots push" aria-label="栏设置"></button><i class="sq"></i></div>
            </section>
          </div>
          <div class="dscroll"><svg viewBox="0 0 16 16"><path d="M4.500 10L8 6.500l3.500 3.500" fill="none" stroke="#aaa" stroke-width="1.700"/></svg></div>
        </div>
      </div>
      <div class="sidetabs">
        <button class="side"><svg viewBox="0 0 16 16"><path d="M0 7L2.500 0h1L6 7M1 5h4" fill="none" stroke="#222"/><circle cx="12" cy="11.500" r="2.700" fill="none" stroke="#222" stroke-width="1.800"/></svg><span>文本</span></button>
        <button class="ib" aria-label="添加泊坞窗"><svg viewBox="0 0 16 16"><path d="M8 2.500v11M2.500 8h11" stroke="#aaa" stroke-width="2"/></svg></button>
      </div>
    </div>
  </section>

  <aside class="palette">
    <i class="grip flat"></i>
    <button aria-label="调色板菜单"><svg viewBox="0 0 16 16"><path d="M6 4l4 4-4 4z" fill="#666"/></svg></button>
    <button class="faded" aria-label="滴管"><svg viewBox="0 0 16 16"><path d="M2 14l7-7" stroke="#555" stroke-width="2.500"/><path d="M8 4l4 4 3-4q0-2-2-2.500z" fill="#555"/></svg></button>
    <button aria-label="向上滚动"><svg viewBox="0 0 16 16"><path d="M4 10l4-4 4 4" fill="none" stroke="#bbb" stroke-width="1.800"/></svg></button>
    <div class="chips" id="chips"></div>
    <button aria-label="向下滚动"><svg viewBox="0 0 16 16"><path d="M4 6l4 4 4-4" fill="none" stroke="#aaa" stroke-width="1.800"/></svg></button>
    <button class="pexp" aria-label="展开"><svg viewBox="0 0 16 16"><path d="M4 5l3 3-3 3M8 5l3 3-3 3" fill="none" stroke="#aaa" stroke-width="1.300"/></svg></button>
  </aside>
</main>

<footer class="status">
  <button class="ib fly" aria-label="状态选项"><svg viewBox="0 0 16 16"><use href="#i-gear"/></svg></button>
  <p class="hint">接着单击可进行拖动或缩放；再单击可旋转或倾斜；双击工具，可选择所有对象；按住 Shift 键单击可选择多个对象；按住 Alt 键单击可进行挖掘</p>
  <div class="fillstat"><svg viewBox="0 0 16 16"><use href="#i-bucket"/></svg><span class="chip"><svg viewBox="0 0 20 20"><path d="M0 20L20 0" stroke="#d8203c" stroke-width="1.700"/></svg></span><span>无</span></div>
  <div class="outstat"><svg viewBox="0 0 16 16"><use href="#i-pen"/></svg><span class="chip dark"></span><span class="cmyk"><span>C:</span><span>0</span><span>M:</span><span>0</span><span>Y:</span><span>0</span><span>K:</span><span>100</span></span></div>
  <svg class="proof" viewBox="0 0 16 16"><path d="M.5.500h15v12H.5z" fill="#d8202c" stroke="#222"/><path d="M1 7h14v5H1z" fill="#16a0b8"/><circle cx="8" cy="7" r="3.500" fill="#fff"/><circle cx="8" cy="7" r="1.500" fill="#333"/><path d="M4 15h8" stroke="#222" stroke-width="2"/></svg>
</footer>

<div class="ime"><span>EN</span><svg viewBox="0 0 12 12"><path d="M5.500 1q3 4 0 6.500Q3.500 9 1 8.700 4 11.500 7.500 10 12 6.500 8.500 2.500 7.500 1.300 5.500 1z" fill="none" stroke="#222"/></svg><span>简</span></div>

<div class="sitemark">
  <svg viewBox="0 0 48 44"><path d="M44 3Q14-3 5 20q-2 12 12 14Q6 24 18 12 27 3 44 3z" fill="#4a9ad8"/><path d="M16 22q12-10 24-4Q26 16 20 27z" fill="#2f7fc4"/><path d="M42 18q2 16-30 25 14-6 18-14 3-8-4-11 12-5 16 0z" fill="#7cc36a"/></svg>
  <div><strong>极光下载站</strong><em>www.xz7.com</em></div>
</div>
<script src="script.js"></script>
</body>
</html>
```
FILE: styles.css
```css
* { box-sizing: border-box; }
body {
  margin: 0; min-height: 100vh; display: flex; flex-direction: column;
  font: 13px/18px "Open Sans", "Noto Sans CJK SC", sans-serif;
  color: #111; background: #f3f3f3; overflow-x: hidden;
}
button, input, select { font: inherit; color: inherit; margin: 0; padding: 0; border: 0; background: none; border-radius: 0; min-width: 0; }
button { display: flex; align-items: center; justify-content: center; flex: none; }
input, select { font-size: 12px; }
input:focus, select:focus { outline: none; }
h1, h2, h3, p { margin: 0; font-size: 13px; font-weight: 400; }
i, em { font-style: normal; }
a { color: inherit; text-decoration: none; }
svg { display: block; width: 16px; height: 16px; flex: none; overflow: visible; }
.sprite { position: absolute; width: 0; height: 0; }

.titlebar { height: 21px; background: #fff; display: flex; align-items: center; padding-left: 3px; }
.titlebar h1 { font-size: 12px; margin-left: 5px; flex: 1; padding-bottom: 1px; }
.winbtns { display: flex; gap: 16px; padding: 0 2px 2px 0; }
.menubar { height: 22px; background: #d6d6d6; display: flex; align-items: center; gap: 23px; padding: 0 0 2px 10px; }
.menubar u, .tb u { text-underline-offset: 1px; }

.toolbar { display: flex; align-items: center; gap: 5px; border-bottom: 1px solid #d4d4d4; padding-left: 4px; }
.standard { height: 32px; }
.property { height: 43px; }
.sep { width: 3px; height: 22px; flex: none; border: solid transparent; border-width: 0 1px; background: #d2d2d2; background-clip: padding-box; }
.property .sep { height: 38px; }
.ib { width: 24px; height: 24px; position: relative; }
.ib.on { background: #fff; border: 1px solid #b0b0b0; }
.ib.off { background: #b5b5b5; }
.fly::after { content: ""; position: absolute; right: 0; bottom: 0; border: 2px solid #888; border-top-color: transparent; border-left-color: transparent; }
.split { display: flex; }
.split .arrow { width: 16px; height: 24px; }
.faded { opacity: .3; }
.dim { opacity: .5; }
.arrow::after, .tri { content: ""; width: 0; height: 0; border: 4px solid transparent; border-top-color: #777; border-bottom: 0; }
.triup { border: 4px solid transparent; border-bottom-color: #777; border-top: 0; }
.pdf { flex-direction: column; }
.pdf b { font-size: 8px; line-height: 9px; color: #888; }
.pdf svg { height: 8px; }
.tb { height: 24px; white-space: nowrap; justify-content: space-between; padding-right: 4px; }
.tb span { padding-bottom: 1px; }
.snap { width: 68px; padding-left: 6px; }
.launch { width: 50px; }

.ecombo, .num { display: flex; height: 24px; border: 1px solid #aaa; background: #fff; flex: none; }
.ecombo input, .num input { flex: 1; padding-left: 4px; width: 0; }
.ecombo .arrow { width: 18px; background: #ececec; border-left: 1px solid #aaa; }
.zoomlvl { width: 86px; }
.select { position: relative; display: flex; height: 24px; flex: none; }
.select select { appearance: none; flex: 1; width: 100%; border: 1px solid #aaa; background: #e9e9e9; padding: 0 0 2px 4px; font-size: 13px; }
.select::after { content: ""; position: absolute; right: 4px; top: 10px; border: 4px solid transparent; border-top-color: #777; border-bottom: 0; pointer-events: none; }
.spin { width: 18px; border-left: 1px solid #aaa; background: #ececec; display: flex; flex-direction: column; align-items: center; justify-content: space-evenly; }
.spin::before, .spinh::after { content: ""; border: 3px solid transparent; border-bottom-color: #888; border-top: 0; }
.spin::after, .spinh::before { content: ""; border: 3px solid transparent; border-top-color: #888; border-bottom: 0; }
.spinh { width: 24px; border-left: 1px solid #aaa; background: #ececec; display: flex; align-items: center; justify-content: space-evenly; }
.papersize { width: 160px; }
.papersize select { font-size: 12px; }
.pair { display: grid; grid-template-columns: 17px 97px; grid-auto-rows: 16px; }
.pair label { display: flex; position: relative; }
.pair sub { position: absolute; right: 0; bottom: 0; font-size: 8px; line-height: 8px; color: #555; }
.mini { display: flex; border: 1px solid #aaa; background: #fff; height: 17px; }
.mini input { flex: 1; width: 0; padding-left: 3px; }
.grp { display: flex; gap: 5px; padding: 0 3px; }
.unitlabel { padding: 0 0 2px 3px; width: 39px; white-space: nowrap; }
.unit { width: 102px; }
.nudge { width: 80px; }
.property .addp { margin-left: 4px; }

.main { flex: 1; display: flex; min-height: 0; }
.toolbox { width: 32px; border-right: 1px solid #c8c8c8; padding: 4px 0 0 4px; display: flex; flex-direction: column; gap: 5px; flex: none; }
.toolbox .sep { width: 23px; height: 3px; border-width: 1px 0; }
.toolbox .addp { margin-top: 4px; }
.texttool { font-size: 16px; font-weight: 700; color: #222; }

.workspace { flex: 1; min-width: 0; display: flex; flex-direction: column; margin-right: 2px; }
.doctabs { height: 21px; background: #e8e8e8; border-bottom: 1px solid #3494cc; display: flex; flex: none; }
.home { width: 18px; background: #d6d6d6; }
.dtab { height: 20px; padding-bottom: 2px; }
.welcome { width: 96px; background: #d6d6d6; justify-content: flex-start; padding-left: 16px; }
.current { width: 95px; background: #cce0ff; justify-content: flex-start; padding-left: 9px; border-left: 1px solid #fff; }
.newtab { width: 22px; background: #dcdcdc; }
.stage { flex: 1; min-height: 0; display: grid; grid-template: 18px minmax(0, 1fr) 17px / 18px minmax(0, 1fr) 17px; background: #f3f3f3; }
.corner { padding: 1px; }
.hruler { grid-column: 2 / 4; border-bottom: 1px solid #d0d0d0; display: flex; position: relative; }
.hruler svg { width: 100%; height: 17px; overflow: hidden; }
.unitname { position: absolute; right: 4px; top: 1px; font-size: 10px; line-height: 12px; color: #777; background: #f3f3f3; }
.vruler { grid-row: 2 / 4; border-right: 1px solid #c8c8c8; min-height: 0; }
.vruler svg { width: 17px; height: 100%; overflow: hidden; }
.stage text { font-size: 9px; fill: #888; text-anchor: middle; }
.canvas { background: #fff; position: relative; overflow: hidden; }
.page { position: absolute; left: 530px; top: 82px; width: 458px; height: 645px; border: 1px solid #a8a8a8; background: #fff; box-shadow: 6px 4px 0 #bdbdbd; }
.pointer { position: absolute; left: 781px; top: 321px; width: 11px; height: 20px; }
.vscroll { display: flex; flex-direction: column; background: #fff; }
.vscroll button { width: 16px; height: 17px; background: #f0f0f0; }
.vtrack { flex: 1; display: flex; flex-direction: column; }
.vtrack::before { content: ""; flex: 172; }
.vtrack::after { content: ""; flex: 172; }
.vtrack i { flex: 430; background: #cdcdcd; width: 16px; }
.bottomrow { grid-column: 2 / 4; display: flex; min-width: 0; }
.pagenav { flex: 0 0 50%; display: flex; align-items: center; border: solid #808080; border-width: 1px 1px 0 0; color: #999; font-size: 12px; }
.pagenav button { width: 16px; height: 16px; }
.pagenav button > svg { width: 12px; height: 12px; }
.pagenav span { width: 11px; text-align: center; padding-bottom: 1px; }
.pagenav .of { width: 20px; }
.pagenav .ptab { width: 48px; position: relative; color: #111; margin-left: 10px; font-size: 13px; }
.pagenav .ptab svg { position: absolute; left: 0; top: -1px; width: 48px; height: 17px; }
.pagenav .ptab span { position: relative; width: auto; padding-bottom: 2px; }
.pagenav .grip { margin-left: auto; margin-right: 2px; height: 12px; }
.grip { width: 6px; height: 16px; background: radial-gradient(circle, #aaa 0 1px, transparent 1px) 0 0 / 3px 3px; flex: none; }
.hscroll { flex: 1; display: flex; background: #f0f0f0; min-width: 0; }
.hscroll i { flex: 1; background: #cdcdcd; margin-top: 1px; }
.hscroll button, .navigator { width: 17px; height: 17px; }
.docpalette { height: 21px; border-top: 1px solid #c8c8c8; display: flex; align-items: center; padding: 0 9px 0 2px; flex: none; }
.docpalette button { width: 18px; height: 18px; }
.docpalette .none { border: 1px solid #444; background: #fff; margin-left: 2px; }
.docpalette p { flex: 1; text-align: center; color: #b0b0b0; font-style: italic; padding: 0 0 2px 20px; }

.docker { width: 314px; border-left: 2px solid #fff; box-shadow: -1px 0 0 #c4c4c4; flex: none; display: flex; flex-direction: column; }
.dockhead { height: 23px; background: #e9e9e9; border-bottom: 1px solid #b8b8b8; display: flex; align-items: center; padding: 0 4px 0 6px; gap: 2px; }
.dockhead h2 { flex: 1; padding-bottom: 2px; }
.dockmain { flex: 1; display: flex; }
.dockcol { flex: 1; display: flex; flex-direction: column; min-width: 0; }
.docktabs { height: 27px; background: #e9e9e9; display: flex; align-items: center; gap: 2px; padding: 0 1px 2px; }
.push { margin-left: auto; }
.dockscroll { flex: 1; display: flex; }
.panel { flex: 1; min-width: 0; border-right: 1px solid #fff; }
.dscroll { width: 16px; background: #f0f0f0; }
.sect { display: flex; flex-direction: column; gap: 5px; padding: 0 6px 0 4px; }
.sect.line { border-top: 1px solid #e4e4e4; margin-top: 6px; }
.sect h3 { height: 24px; display: flex; align-items: center; font-weight: 700; padding: 0 0 2px 5px; gap: 7px; }
.triup { margin-right: 3px; }
.sect h3 .ib { margin-left: auto; margin-right: -3px; }
.row { height: 24px; display: flex; align-items: center; gap: 7px; }
.row.spaced { margin-top: 8px; }
.row.tight { gap: 5px; }
.row.tight .dots + .sq { margin-left: 2px; }
.sq { width: 7px; height: 7px; border: 1px solid #d2d2d2; background: #fff; flex: none; }
.font { width: 164px; }
.size { width: 65px; }
.ctl { display: flex; width: 164px; align-items: center; flex: none; }
.ctl.short { width: 115px; }
.ctl.short + .sq + .ctl.short { width: 114px; }
.ctl.frame { width: 72px; }
.ctl label, .lead { width: 19px; flex: none; }
.ctl .select, .ctl .num, .ctl .ecombo { flex: 1; min-width: 0; }
.kern { background: #f3f3f3; border-color: #ccc; }
.kern .spin { opacity: .4; }
.swatch { width: 52px; height: 24px; border: 1px solid #aaa; background: #fff; justify-content: flex-start; }
.frame .swatch { width: 53px; }
.swatch i { width: 26px; height: 16px; margin: 0 3px; }
.swatch svg { width: 32px; height: 22px; }
.swatch b { width: 18px; height: 22px; border-left: 1px solid #aaa; background: #ececec; display: flex; align-items: center; justify-content: center; margin-left: auto; }
.swatch b::after { content: ""; border: 4px solid transparent; border-top-color: #777; border-bottom: 0; }
.brown { background: #231815; }
.black { background: #000; }
.dots { background: radial-gradient(circle, #333 0 2px, transparent 3px) 2px 50% / 6px 6px no-repeat, radial-gradient(circle, #333 0 2px, transparent 3px) 9px 50% / 6px 6px no-repeat, radial-gradient(circle, #333 0 2px, transparent 3px) 16px 50% / 6px 6px no-repeat; }
.wide { margin-left: 15px; }
.lunit { width: 114px; }
.more { width: 100%; height: 18px; background: #e9e9e9; margin-top: 7px; }
.more.far { margin-top: 15px; }
.sidetabs { width: 21px; background: #e9e9e9; border-left: 1px solid #b0b0b0; display: flex; flex-direction: column; align-items: center; }
.side { width: 100%; height: 73px; background: #b0b0b0; flex-direction: column; justify-content: flex-start; padding-top: 4px; gap: 6px; }
.side span { writing-mode: vertical-rl; text-orientation: sideways; line-height: 18px; }

.palette { width: 21px; flex: none; display: flex; flex-direction: column; align-items: center; min-height: 0; }
.palette button { height: 18px; width: 20px; }
.grip.flat { width: 18px; height: 6px; margin: 2px 0; }
.chips { flex: 1; min-height: 0; contain: size; overflow: hidden; width: 18px; border: 1px solid #444; border-bottom: 0; }
.chips b { display: block; height: 17px; border-bottom: 1px solid #444; }
.chips svg { background: #fff; }
.palette .pexp { margin-bottom: 5px; }

.status { height: 39px; border-top: 1px solid #ccc; border-bottom: 1px solid #2a3030; display: flex; align-items: center; padding: 0 11px 0 7px; flex: none; }
.hint { flex: 1; margin-left: 5px; white-space: nowrap; padding-bottom: 2px; }
.fillstat, .outstat { display: flex; align-items: center; gap: 3px; }
.fillstat { width: 202px; }
.outstat { width: 261px; }
.chip { width: 21px; height: 21px; border: 1px solid #999; background: #fff; margin-right: 1px; }
.chip svg { width: 19px; height: 19px; }
.chip.dark { background: #231815; }
.cmyk { display: grid; grid-template-columns: 18px 11px 23px 11px 21px 11px 20px 24px; font-size: 12px; }
.cmyk span:nth-child(even) { text-align: right; padding-right: 1px; }
.cmyk span:nth-child(odd) { padding-left: 1px; }

.ime { position: fixed; right: 585px; bottom: 56px; width: 62px; height: 26px; border: 1px solid #999; border-radius: 5px; background: #fff; box-shadow: 0 2px 3px #0006; display: flex; align-items: center; justify-content: center; gap: 3px; font-size: 12px; }
.ime svg { width: 12px; height: 12px; }
.sitemark { position: fixed; right: 11px; bottom: 8px; display: flex; gap: 2px; opacity: .75; pointer-events: none; }
.sitemark > svg { width: 42px; height: 40px; }
.sitemark strong, .sitemark em { display: block; white-space: nowrap; }
.sitemark strong { font-size: 21px; line-height: 24px; font-weight: 500; color: #5a9bd8; }
.sitemark em { font: 700 16px/18px "Liberation Sans", sans-serif; color: #5dbb63; }
```
FILE: script.js
```js
const NS = 'http://www.w3.org/2000/svg';
const PX_PER_MM = 2.1735;

function add(svg, name, attrs, text) {
  const el = document.createElementNS(NS, name);
  for (const k in attrs) el.setAttribute(k, attrs[k]);
  if (text !== undefined) el.textContent = text;
  svg.appendChild(el);
}

function drawRuler(id, origin, direction, marker) {
  const svg = document.getElementById(id);
  const box = svg.getBoundingClientRect();
  const horizontal = id === 'hruler';
  const length = horizontal ? box.width : box.height;
  // The unit name takes the end of the horizontal ruler, so no number goes there.
  const labelEnd = horizontal ? length - 36 : length;
  svg.replaceChildren();
  for (let mm = -450; mm <= 900; mm += 5) {
    const p = Math.round(origin + direction * mm * PX_PER_MM);
    if (p < 0 || p > length) continue;
    const size = mm % 50 === 0 ? 5 : mm % 25 === 0 ? 2 : 1;
    const tick = horizontal
      ? { x: p, y: 15 - size + 1, width: 1, height: size }
      : { x: 15 - size + 1, y: p, width: size, height: 1 };
    add(svg, 'rect', { ...tick, fill: '#777' });
    if (mm % 50 === 0 && p < labelEnd) {
      const label = horizontal
        ? { x: p, y: 10 }
        : { transform: `translate(11 ${p - 1}) rotate(-90)` };
      add(svg, 'text', label, Math.abs(mm));
    }
  }
  const line = horizontal
    ? { x1: marker, x2: marker, y1: 1, y2: 17 }
    : { y1: marker, y2: marker, x1: 1, x2: 17 };
  add(svg, 'line', { ...line, stroke: '#000', 'stroke-dasharray': '3 3' });
}

function drawRulers() {
  drawRuler('hruler', 530, 1, 781.5);
  drawRuler('vruler', 727, -1, 321.5);
}
drawRulers();
addEventListener('resize', drawRulers);

const colours = ('231815 3e3a39 595757 727171 898989 9fa0a0 b5b5b6 c9caca dcdddf efefef ffffff 1d2088 00a0e9 009944 fff100 ' +
  'e60012 e4007f b04084 f08300 f3aeb4 8a766b cfcbe4 a29acb 6e8acb 7a6ab2 8a80ae 52658f 5b5373 74889f 008ddb 9fdafb b8cddc ' +
  '93a7b1 6b7c8b 47505d 527773 3c8f7b 709a99 4da997 55a46c 56c2d3 4ba8b4 b3cdbd d3ecd9 a0d8ac').split(' ');
const chips = document.getElementById('chips');
const none = document.createElement('b');
none.innerHTML = '<svg viewBox="0 0 16 16"><path d="M2 14L14 2" stroke="#d03040"/></svg>';
chips.append(none);
for (const c of colours) {
  const chip = document.createElement('b');
  chip.style.background = '#' + c;
  chips.append(chip);
}
```
